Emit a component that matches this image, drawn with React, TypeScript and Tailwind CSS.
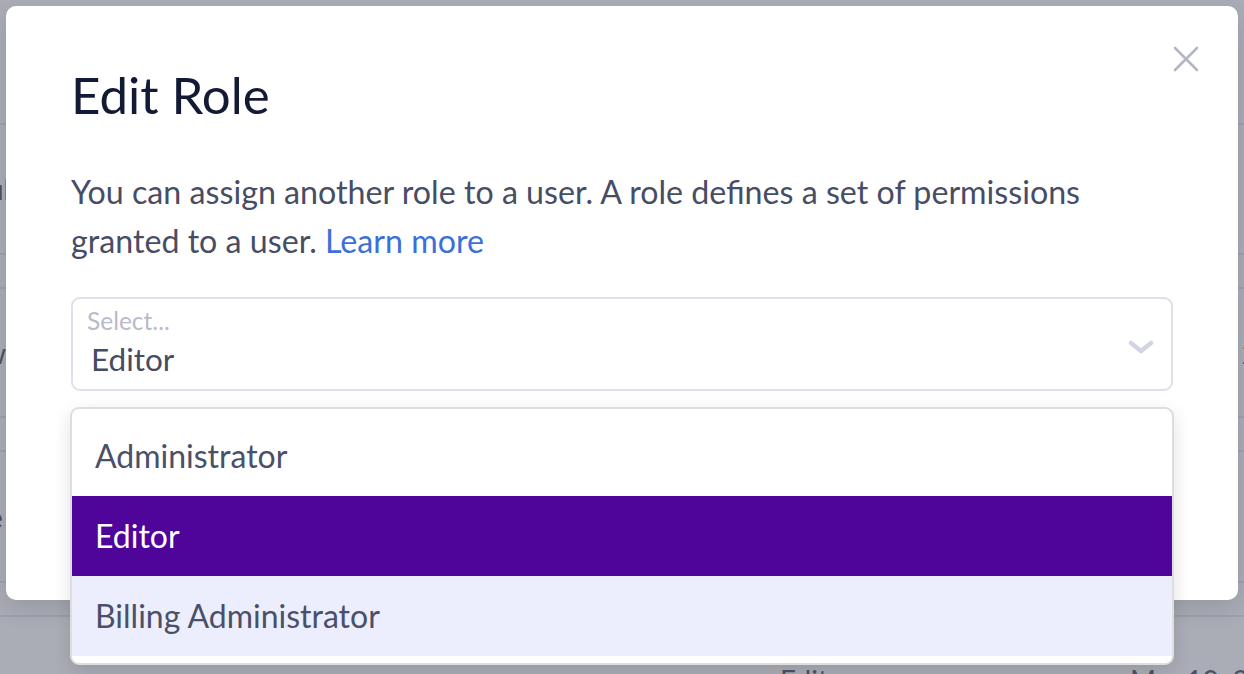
import { useState } from "react";

const ROLES = ["Administrator", "Editor", "Billing Administrator"];

function Backdrop() {
  // the dimmed table page behind the modal
  return (
    <div className="h-[674px] overflow-hidden whitespace-nowrap bg-[#abadb6] text-[28px] text-[#4d5165]">
      <div className="flex h-[125px] items-center justify-end border-b-2 border-[#9ea1ae]">
        <span className="mr-[-8px] mb-[20px]">i</span>
      </div>
      <div className="flex h-[130px] items-center justify-between border-b-2 border-[#9ea1ae]">
        <span className="ml-[-12px]">ul</span>
        <span className="mr-[-10px]">:</span>
      </div>
      <div className="h-[34px] border-b-2 border-[#9ea1ae]" />
      <div className="flex h-[129px] items-center justify-between border-b-2 border-[#9ea1ae]">
        <span className="ml-[-16px]">w</span>
        <span className="mr-[-14px]">2</span>
      </div>
      <div className="h-[34px] border-b-2 border-[#9ea1ae]" />
      <div className="flex h-[131px] items-center justify-between border-b-2 border-[#9ea1ae]">
        <span className="ml-[-12px]">e</span>
        <span className="mr-[-10px]">:</span>
      </div>
      <div className="h-[34px] border-b-2 border-[#9ea1ae]" />
      <div className="flex pt-[46px] leading-[34px]">
        <span className="ml-[780px]">Editor</span>
        <span className="ml-[276px]">Mar 10, 2022</span>
      </div>
    </div>
  );
}

export default function App() {
  const [role, setRole] = useState("Editor");
  const [hover] = useState("Billing Administrator");

  return (
    <div className="relative h-[674px] w-[1244px] overflow-hidden font-['Lato','Noto_Sans',sans-serif]">
      <Backdrop />

      <div className="absolute left-[6px] top-[6px] h-[594px] w-[1232px] rounded-[10px] bg-white px-[65px] pt-[59px] shadow-[0_8px_24px_rgba(0,0,0,0.12)]">
        <button className="absolute right-[39px] top-[40px] text-[#b3b7c3]">
          <svg width="26" height="26" viewBox="0 0 26 26" fill="none" stroke="currentColor" strokeWidth="2.6" strokeLinecap="round">
            <path d="M2 2 L24 24 M24 2 L2 24" />
          </svg>
        </button>

        <h2 className="text-[51px] leading-[60px] text-[#131a33]">Edit Role</h2>

        <p className="mt-[42px] text-[32.2px] leading-[49px] text-[#474d65]">
          You can assign another role to a user. A role defines a set of permissions granted to a user.{" "}
          <a className="text-[#3b6fdb]">Learn more</a>
        </p>

        <div className="relative mt-[32px]">
          <div className="flex h-[94px] justify-between rounded-[9px] border-2 border-[#dfe1ea] pl-[14px] pr-[16px] pt-[7px]">
            <div className="flex flex-col">
              <span className="text-[24.5px] leading-[30px] text-[#b8bbca]">Select...</span>
              <span className="ml-[4px] mt-[3px] text-[31.5px] leading-[40px] text-[#454b62]">{role}</span>
            </div>
            <svg className="mt-[32px]" width="28" height="18" viewBox="0 0 28 18" fill="none" stroke="#d2d5e1" strokeWidth="4.5" strokeLinecap="round" strokeLinejoin="round">
              <path d="M4 5 L14 13 L24 5" />
            </svg>
          </div>

          <div className="absolute left-[-1px] top-[110px] w-[1104px] rounded-[9px] border-2 border-[#dedede] bg-white py-[7px] shadow-[0_6px_18px_rgba(0,0,0,0.12)]">
            {ROLES.map((r) => (
              <div
                key={r}
                onClick={() => setRole(r)}
                className={
                  r === role
                    ? "flex h-[80px] items-center bg-[#4f0599] pl-[23px] text-[32px] text-white"
                    : r === hover
                      ? "flex h-[80px] items-center bg-[#eceefd] pl-[23px] text-[32px] text-[#4a5068]"
                      : "flex h-[80px] items-center pl-[23px] text-[32px] text-[#4a5068]"
                }
              >
                {r}
              </div>
            ))}
          </div>
        </div>
      </div>
    </div>
  );
}
